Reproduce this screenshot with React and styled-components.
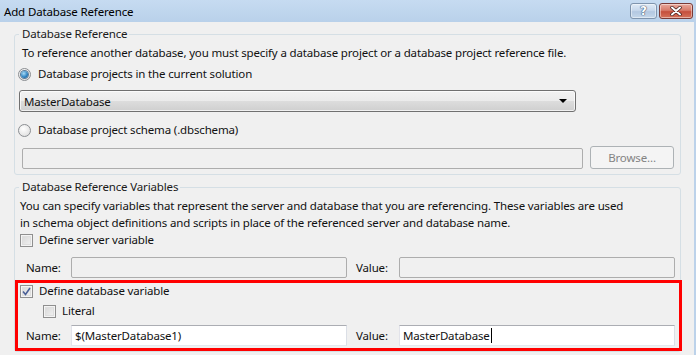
import React from 'react';
import styled, { createGlobalStyle } from 'styled-components';

const GlobalStyle = createGlobalStyle`
  html, body {
    margin: 0;
    padding: 0;
    background: #f0f0f0;
  }
  body {
    font-family: 'Noto Sans', 'Open Sans', sans-serif;
    font-size: 11.5px;
    letter-spacing: -0.15px;
    color: #111;
  }
`;

const Window = styled.div`
  width: 696px;
  height: 355px;
  overflow: hidden;
  box-sizing: border-box;
  background: #f0f0f0;
  border-right: 2px solid #bcd2ea;
  display: flex;
  flex-direction: column;
`;

const TitleBar = styled.div`
  height: 22px;
  flex: none;
  display: flex;
  align-items: center;
  padding: 0 1px 0 4px;
  background: linear-gradient(#c6dbf1, #b9d1ea);
`;

const Title = styled.div`
  flex: 1;
  color: #000;
`;

const CaptionButtons = styled.div`
  display: flex;
  gap: 2px;
  align-self: flex-start;
  margin-top: 3px;
`;

const CaptionButton = styled.div`
  width: ${p => (p.$close ? 34 : 27)}px;
  height: 16px;
  box-sizing: border-box;
  border: 1px solid ${p => (p.$close ? '#7a3a36' : '#7f94ad')};
  border-radius: 3px;
  display: flex;
  align-items: center;
  justify-content: center;
  background: ${p =>
    p.$close
      ? 'linear-gradient(#e9a99c, #d77b6a 45%, #c54f3c 55%, #d5725a)'
      : 'linear-gradient(#dfeaf6, #c7d8ec 45%, #b3c8e1 55%, #c5d7ea)'};
  box-shadow: inset 0 0 0 1px rgba(255, 255, 255, 0.45);
`;

const HelpGlyph = styled.span`
  font-family: 'DejaVu Sans', sans-serif;
  font-weight: bold;
  font-size: 12px;
  line-height: 12px;
  color: #fff;
  text-shadow: 0 0 1px #3d5372, 0 0 1px #3d5372, 0 0 1px #3d5372;
`;

const Client = styled.div`
  flex: 1;
  padding: 4px 0 0 14px;
`;

const Group = styled.fieldset`
  width: 667px;
  box-sizing: border-box;
  margin: ${p => (p.$gap ? '4px' : '0')} 0 0 0;
  padding: 0 0 ${p => p.$bottom || 0}px 4px;
  border: 1px solid #d5dfe5;
  border-radius: 3px;
  min-inline-size: 0;
`;

const Legend = styled.legend`
  padding: 0 2px 0 3px;
  line-height: 16px;
  color: #1a1a1a;
`;

const Note = styled.div`
  margin: ${p => p.$top || 0}px 0 0 ${p => p.$left ?? 3}px;
  line-height: ${p => p.$lh || 16}px;
`;

const OptionRow = styled.label`
  display: flex;
  align-items: center;
  gap: ${p => p.$gap ?? 7}px;
  height: 16px;
  margin: ${p => p.$top || 0}px 0 0 ${p => p.$left || 0}px;
  line-height: 16px;
`;

const RadioDot = styled.span`
  width: 13px;
  height: 13px;
  box-sizing: border-box;
  margin-left: -1px;
  border-radius: 50%;
  border: 1px solid #8b8e92;
  background: radial-gradient(circle at 40% 35%, #ffffff, #e4e4e4 70%, #cfcfcf);
  display: flex;
  align-items: center;
  justify-content: center;

  &::after {
    content: '';
    display: ${p => (p.$on ? 'block' : 'none')};
    width: 7px;
    height: 7px;
    border-radius: 50%;
    background: radial-gradient(circle at 40% 35%, #a9dcf7, #2a7fbf 60%, #154f83);
    box-shadow: 0 0 0 1px #5d7c98;
  }
`;

const CheckBox = styled.span`
  width: 13px;
  height: 13px;
  box-sizing: border-box;
  border: 1px solid #8f8f8f;
  background: linear-gradient(135deg, #d5d5d5, #f4f4f4);
  box-shadow: inset 0 0 0 1px #f4f4f4, inset 0 0 0 2px #dedede;
  display: flex;
  align-items: center;
  justify-content: center;
  flex: none;
`;

const Combo = styled.div`
  width: 557px;
  height: 22px;
  box-sizing: border-box;
  margin-top: 8px;
  border: 1px solid #707070;
  border-radius: 3px;
  background: linear-gradient(#f2f2f2, #ebebeb 50%, #dddddd 50%, #cfcfcf);
  box-shadow: inset 0 0 0 1px rgba(255, 255, 255, 0.7);
  display: flex;
  align-items: center;
  padding: 0 8px 0 4px;
`;

const ComboText = styled.span`
  flex: 1;
`;

const ComboArrow = styled.span`
  width: 0;
  height: 0;
  border-left: 4px solid transparent;
  border-right: 4px solid transparent;
  border-top: 4px solid #000;
`;

const BrowseRow = styled.div`
  display: flex;
  align-items: flex-end;
  gap: 7px;
  margin: 8px 0 0 3px;
  height: 23px;
`;

const TextBox = styled.div`
  width: ${p => p.$w}px;
  height: 21px;
  box-sizing: border-box;
  border: 1px solid;
  border-color: ${p => (p.$enabled ? '#abadb3 #dbdfe6 #e3e9ef #e2e3ea' : '#adadad')};
  border-radius: ${p => (p.$enabled ? 0 : 2)}px;
  background: ${p => (p.$enabled ? '#fff' : '#f0f0f0')};
  display: flex;
  align-items: center;
  padding-left: 3px;
  line-height: 16px;
  white-space: nowrap;
`;

const Caret = styled.span`
  display: inline-block;
  width: 1px;
  height: 15px;
  background: #000;
  margin-left: 1px;
`;

const DisabledButton = styled.div`
  width: 84px;
  height: 23px;
  box-sizing: border-box;
  border: 1px solid #adb2b5;
  border-radius: 3px;
  background: #f4f4f4;
  color: #838383;
  display: flex;
  align-items: center;
  justify-content: center;
`;

const FieldRow = styled.div`
  display: flex;
  align-items: center;
  margin-top: ${p => p.$top || 0}px;
  padding-left: ${p => p.$pad}px;
`;

const FieldLabel = styled.span`
  width: ${p => p.$w}px;
  margin-left: ${p => p.$gap || 0}px;
  flex: none;
`;

const Highlight = styled.div`
  width: 667px;
  box-sizing: border-box;
  margin: 2px 0 0 -4px;
  border: 3px solid #ff0000;
  padding: 0 0 2px 0;
`;

const Check = () => (
  <svg width="9" height="9" viewBox="0 0 9 9">
    <path d="M1 4.5 L3.5 7.5 L8 1" fill="none" stroke="#4a5f97" strokeWidth="1.6" />
  </svg>
);

export default function App() {
  return (
    <Window>
      <GlobalStyle />
      <TitleBar>
        <Title>Add Database Reference</Title>
        <CaptionButtons>
          <CaptionButton>
            <HelpGlyph>?</HelpGlyph>
          </CaptionButton>
          <CaptionButton $close>
            <svg width="12" height="10" viewBox="0 0 12 10">
              <path d="M2 1.5 L10 8.5 M10 1.5 L2 8.5" stroke="#3a1a18" strokeWidth="3.4" strokeLinecap="round" />
              <path d="M2 1.5 L10 8.5 M10 1.5 L2 8.5" stroke="#fff" strokeWidth="2" strokeLinecap="round" />
            </svg>
          </CaptionButton>
        </CaptionButtons>
      </TitleBar>

      <Client>
        <Group $bottom={5}>
          <Legend>Database Reference</Legend>
          <Note $top={3}>
            To reference another database, you must specify a database project or a database project reference file.
          </Note>
          <OptionRow $top={5}>
            <RadioDot $on />
            Database projects in the current solution
          </OptionRow>
          <Combo>
            <ComboText>MasterDatabase</ComboText>
            <ComboArrow />
          </Combo>
          <OptionRow $top={10}>
            <RadioDot />
            Database project schema (.dbschema)
          </OptionRow>
          <BrowseRow>
            <TextBox $w={561} />
            <DisabledButton>Browse...</DisabledButton>
          </BrowseRow>
        </Group>

        <Group $gap>
          <Legend>Database Reference Variables</Legend>
          <Note $top={2} $left={1} $lh={17}>
            You can specify variables that represent the server and database that you are referencing. These variables are used
            <br />
            in schema object definitions and scripts in place of the referenced server and database name.
          </Note>
          <OptionRow $top={1} $left={1} $gap={6}>
            <CheckBox />
            Define server variable
          </OptionRow>
          <FieldRow $top={9} $pad={7}>
            <FieldLabel $w={45}>Name:</FieldLabel>
            <TextBox $w={276} />
            <FieldLabel $w={43} $gap={9}>Value:</FieldLabel>
            <TextBox $w={276} />
          </FieldRow>

          <Highlight>
            <OptionRow $left={2} $gap={6}>
              <CheckBox>
                <Check />
              </CheckBox>
              Define database variable
            </OptionRow>
            <OptionRow $top={4} $left={25} $gap={6}>
              <CheckBox />
              Literal
            </OptionRow>
            <FieldRow $top={6} $pad={8}>
              <FieldLabel $w={45}>Name:</FieldLabel>
              <TextBox $w={276} $enabled>$(MasterDatabase1)</TextBox>
              <FieldLabel $w={43} $gap={9}>Value:</FieldLabel>
              <TextBox $w={276} $enabled>
                MasterDatabase
                <Caret />
              </TextBox>
            </FieldRow>
          </Highlight>
        </Group>
      </Client>
    </Window>
  );
}
